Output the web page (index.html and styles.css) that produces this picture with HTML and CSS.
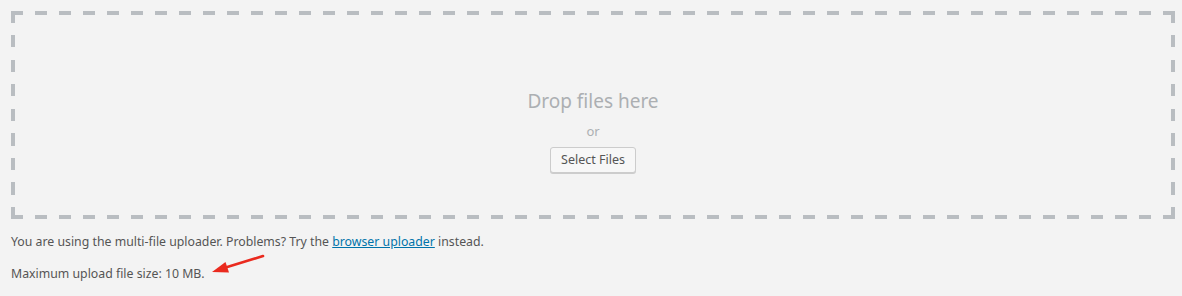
FILE: index.html
```html
<!DOCTYPE html>
<html>
<head>
<meta charset="utf-8">
<link rel="stylesheet" href="styles.css">
</head>
<body>
<div class="uploader">
  <div class="drop-area">
    <div class="drop-inside">
      <p class="drop-info">Drop files here</p>
      <p class="drop-or">or</p>
      <p class="drop-buttons"><button class="button">Select Files</button></p>
    </div>
  </div>
  <p class="note">You are using the multi-file uploader. Problems? Try the <a href="#">browser uploader</a> instead.</p>
  <p class="note max">Maximum upload file size: 10 MB.
    <svg class="arrow" width="60" height="24" viewBox="0 0 60 24">
      <line x1="53" y1="3" x2="14" y2="15" stroke="#ea2a1e" stroke-width="2.6" stroke-linecap="round"/>
      <polygon points="2,19 15.5,9 19,19.5" fill="#ea2a1e"/>
    </svg>
  </p>
</div>
</body>
</html>
```
FILE: styles.css
```css
html, body {
  margin: 0;
  padding: 0;
  background: #f3f3f3;
}
body {
  font-family: "Noto Sans", "Open Sans", sans-serif;
  font-size: 13px;
  color: #555;
}
.uploader {
  padding: 11px 7px 0 11px;
}
.drop-area {
  box-sizing: border-box;
  height: 208px;
  padding: 4px;
  text-align: center;
  background:
    repeating-linear-gradient(to right, #b9bdc1 0 12px, transparent 12px 24px) left top / 100% 4px no-repeat,
    repeating-linear-gradient(to right, #b9bdc1 0 12px, transparent 12px 24px) left bottom / 100% 4px no-repeat,
    repeating-linear-gradient(to bottom, #b9bdc1 0 12px, transparent 12px 24.5px) left top / 4px 100% no-repeat,
    repeating-linear-gradient(to bottom, #b9bdc1 0 12px, transparent 12px 24.5px) right top / 4px 100% no-repeat;
}
.drop-inside {
  padding-top: 72px;
}
.drop-inside p {
  margin: 0;
}
.drop-info {
  font-size: 19px;
  line-height: 28px;
  color: #acafb2;
}
.drop-or {
  line-height: 18px;
  margin-top: 7px !important;
  color: #acafb2;
}
.drop-buttons {
  margin-top: 7px !important;
}
.button {
  font-family: inherit;
  font-size: 12.5px;
  color: #555;
  background: #f7f7f7;
  border: 1px solid #ccc;
  border-radius: 3px;
  box-shadow: 0 1px 0 #ccc;
  height: 26px;
  padding: 0 10px 1px;
  line-height: 24px;
}
.note {
  margin: 13px 0 0;
  line-height: 19px;
  font-size: 12.3px;
}
.note a {
  color: #0073aa;
  text-decoration: underline;
}
.max {
  position: relative;
}
.arrow {
  position: absolute;
  left: 199px;
  top: -11px;
}
```
